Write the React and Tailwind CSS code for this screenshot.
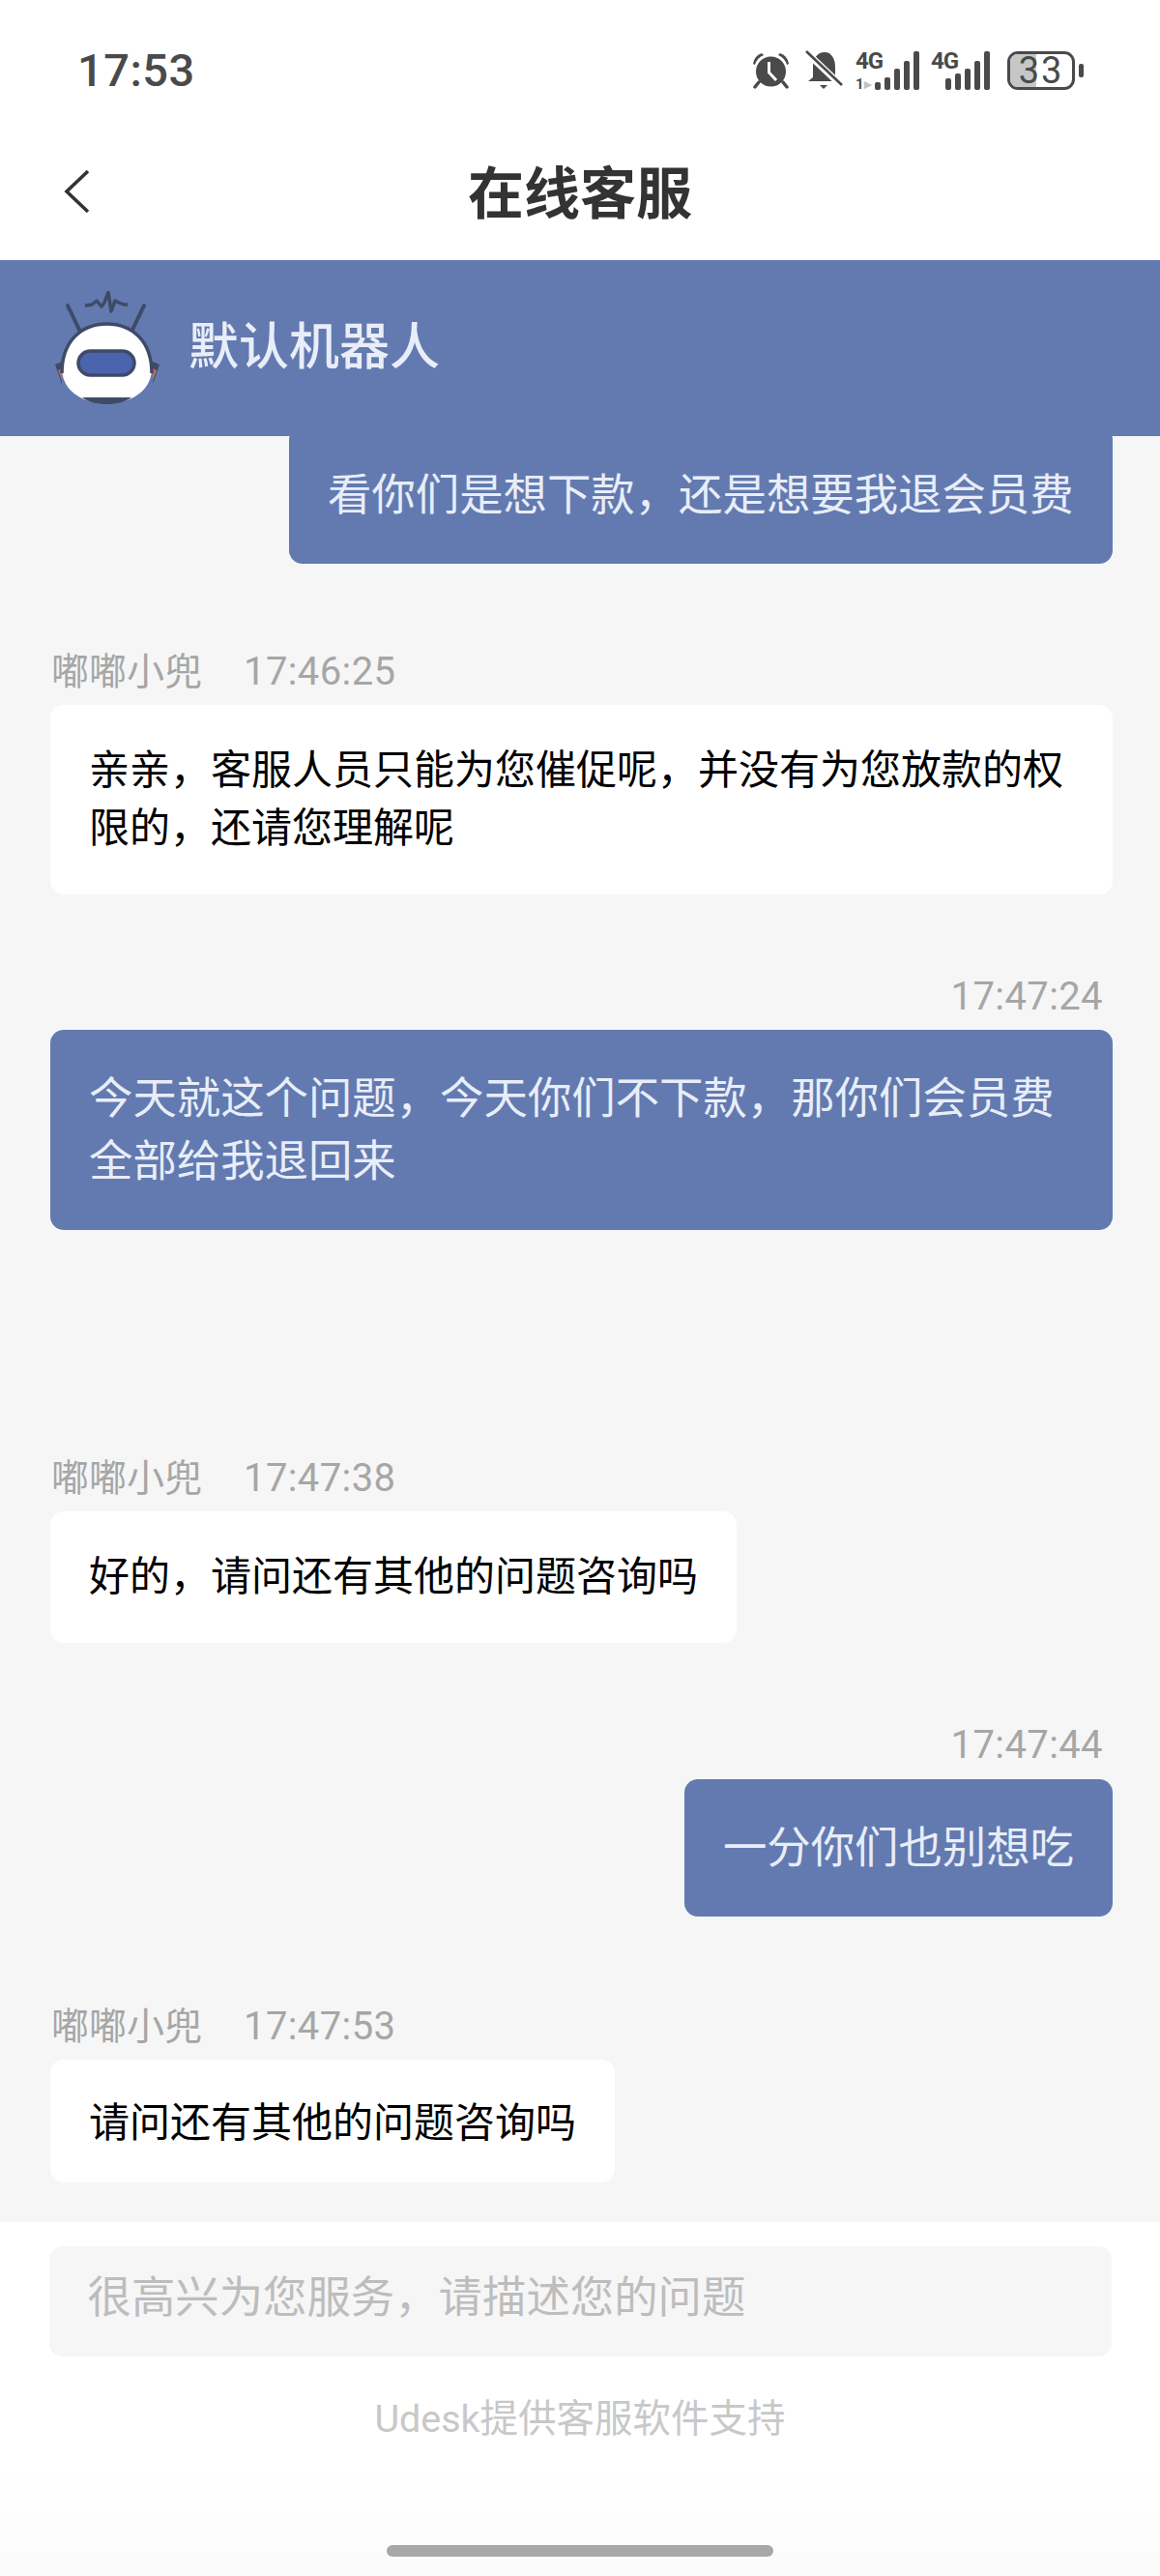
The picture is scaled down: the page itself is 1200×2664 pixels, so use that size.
const cjk = "font-['Roboto','Noto_Sans_CJK_SC',sans-serif]";

function AlarmIcon() {
  return (
    <svg width="39" height="38" viewBox="0 0 39 38">
      <circle cx="19.5" cy="20" r="15.5" fill="#4a4a4a" />
      <path d="M1 12 Q2 4 10 1 L12 3 Q5 6 3 13 Z" fill="#4a4a4a" />
      <path d="M38 12 Q37 4 29 1 L27 3 Q34 6 36 13 Z" fill="#4a4a4a" />
      <path d="M7 31 L3 36 M32 31 L36 36" stroke="#4a4a4a" strokeWidth="3.5" strokeLinecap="round" />
      <path d="M17.5 10 V21 L25 29" stroke="#fff" strokeWidth="3" fill="none" />
    </svg>
  );
}

function BellOffIcon() {
  return (
    <svg width="39" height="42" viewBox="0 0 39 42">
      <path d="M20 2 C28 2 31 10 31 17 V26 L36 32 H3 L8 28 V17 C8 9 12 2 20 2 Z" fill="#4a4a4a" />
      <path d="M15 36 H23 L19 40 Z" fill="#4a4a4a" />
      <path d="M1 2 L38 37" stroke="#fff" strokeWidth="7" />
      <path d="M1 1 L38 36" stroke="#4a4a4a" strokeWidth="2.6" />
    </svg>
  );
}

function Signal({ primary }) {
  const bars = primary ? [8, 13, 22, 30, 40] : [12, 17, 22, 30, 40];
  return (
    <div className={`relative flex h-[40px] items-end justify-end ${primary ? "w-[66px]" : "w-[61px]"}`}>
      <span className="absolute top-[-3px] left-0 text-[24px] leading-[26px] font-bold tracking-[-1px] text-[#4a4a4a] font-['Roboto',sans-serif]">
        4G
      </span>
      {primary ? (
        <span className="absolute bottom-[-2px] left-0 text-[15px] leading-[16px] font-bold text-[#4a4a4a] font-['Roboto',sans-serif]">
          1<span className="text-[#c4c4c4]">▸</span>
        </span>
      ) : null}
      <div className="flex items-end gap-[4px]">
        {bars.map((h, i) => (
          <div key={i} className="w-[6px] rounded-[2px] bg-[#4a4a4a]" style={{ height: h }} />
        ))}
      </div>
    </div>
  );
}

function Battery() {
  return (
    <div className="flex items-center gap-[4px]">
      <div className="relative flex h-[40px] w-[70px] items-center justify-center rounded-[11px] border-[3px] border-[#4a4a4a]">
        <div className="absolute inset-y-0 left-0 w-[27px] rounded-l-[8px] bg-[#c6c6c6]" />
        <span className="relative text-[38px] leading-[34px] tracking-[2px] text-[#4a4a4a] font-['Roboto',sans-serif]">33</span>
      </div>
      <div className="h-[14px] w-[5px] rounded-[2px] bg-[#4a4a4a]" />
    </div>
  );
}

function StatusBar() {
  return (
    <div className="flex h-[106px] items-end justify-between pr-[79px] pb-[12px] pl-[80px]">
      <span className="mb-[-5px] text-[47px] leading-[52px] font-medium tracking-[0.5px] text-[#4a4a4a] font-['Roboto',sans-serif]">17:53</span>
      <div className="flex items-center">
        <AlarmIcon />
        <div className="ml-[16px]">
          <BellOffIcon />
        </div>
        <div className="ml-[13px]">
          <Signal primary />
        </div>
        <div className="ml-[12px]">
          <Signal />
        </div>
        <div className="ml-[18px]">
          <Battery />
        </div>
      </div>
    </div>
  );
}

function Robot() {
  return (
    <svg width="112" height="118" viewBox="0 0 112 118">
      <path d="M15 15 L27 40 M94 15 L82 40" stroke="#3f4a66" strokeWidth="4" strokeLinecap="round" />
      <path d="M33 15 L40 14 L45 10 L50 16 L53 12 L57 1 L60 21 L64 10 L68 12 L73 14 L77 14" stroke="#3f4a66" strokeWidth="3.5" fill="none" strokeLinejoin="round" />
      <path d="M2 76 L9 73 V96 Z M110 76 L103 73 V96 Z" fill="#3f4a66" />
      <path d="M5 82 L9 80 V93 Z M107 82 L103 80 V93 Z" fill="#c96a55" />
      <path d="M55.5 34 C82 34 102 52 102 80 C102 100 85 116 55.5 116 C26 116 9 100 9 80 C9 52 29 34 55.5 34 Z" fill="#fff" />
      <path d="M9 85 C9 52 29 34 55.5 34 C82 34 102 52 102 85" stroke="#3f4a66" strokeWidth="3.5" fill="none" />
      <path d="M30 110 H81 C74 115 65 117 55.5 117 C46 117 37 115 30 110 Z" fill="#3f4a66" />
      <rect x="26" y="62" width="58" height="25" rx="12.5" fill="#4a64ad" stroke="#3f4a66" strokeWidth="3.5" />
    </svg>
  );
}

function Header() {
  return (
    <>
      <div className="grid h-[163px] grid-cols-[1fr_auto_1fr] items-start">
        <svg className="mt-[69px] ml-[66px]" width="28" height="46" viewBox="0 0 28 46" fill="none">
          <path d="M25 2 L3 23 L25 44" stroke="#333" strokeWidth="3.6" />
        </svg>
        <h1 className="mt-[55px] text-[58px] leading-[70px] font-bold text-[#333] font-['Noto_Sans_CJK_SC',sans-serif]">在线客服</h1>
      </div>
      <div className="relative z-10 flex h-[182px] items-center bg-[#627ab0] pl-[55px]">
        <Robot />
        <span className="mb-[10px] ml-[28px] text-[52px] leading-[60px] font-medium text-[#e8edf8] font-['Noto_Sans_CJK_SC',sans-serif]">默认机器人</span>
      </div>
    </>
  );
}

function AgentLabel({ time, className }) {
  return (
    <div className={`flex h-[44px] items-center pt-[3px] pl-[1px] text-[39px] leading-[44px] text-[#a6a6a6] ${cjk} ${className}`}>
      <span>嘟嘟小兜</span>
      <span className="ml-[43px] text-[40px] tracking-[0.4px]">{time}</span>
    </div>
  );
}

function TimeLabel({ time, className }) {
  return (
    <div className={`flex h-[44px] items-center justify-end pt-[3px] pr-[10px] text-[40px] leading-[44px] tracking-[0.4px] text-[#a6a6a6] ${cjk} ${className}`}>
      {time}
    </div>
  );
}

function AgentBubble({ children, className }) {
  return (
    <div className={`rounded-[14px] bg-white px-[40px] py-[38px] text-[42px] leading-[60px] text-black ${cjk} ${className}`}>
      {children}
    </div>
  );
}

function UserBubble({ children, className }) {
  return (
    <div className={`rounded-[14px] bg-[#627ab0] px-[40px] py-[38.5px] text-[45.4px] leading-[65px] text-[#e8edf8] ${cjk} ${className}`}>
      {children}
    </div>
  );
}

function Chat() {
  return (
    <div className="h-[1847px] overflow-hidden bg-[#f6f6f6] pr-[49px] pl-[52px]">
      <UserBubble className="-mt-[10px] ml-[247px] whitespace-nowrap">看你们是想下款，还是想要我退会员费</UserBubble>

      <AgentLabel time="17:46:25" className="mt-[88px]" />
      <AgentBubble className="mt-[14px]">亲亲，客服人员只能为您催促呢，并没有为您放款的权限的，还请您理解呢</AgentBubble>

      <TimeLabel time="17:47:24" className="mt-[82px]" />
      <UserBubble className="mt-[14px]">今天就这个问题，今天你们不下款，那你们会员费全部给我退回来</UserBubble>

      <AgentLabel time="17:47:38" className="mt-[233px]" />
      <AgentBubble className="mt-[14px] w-fit">好的，请问还有其他的问题咨询吗</AgentBubble>

      <TimeLabel time="17:47:44" className="mt-[82px]" />
      <UserBubble className="mt-[15px] ml-auto w-fit">一分你们也别想吃</UserBubble>

      <AgentLabel time="17:47:53" className="mt-[90px]" />
      <AgentBubble className="mt-[14px] h-[127px] w-fit pt-[36px]">请问还有其他的问题咨询吗</AgentBubble>
    </div>
  );
}

function Footer() {
  return (
    <div className="flex h-[366px] flex-col items-center bg-gradient-to-b from-white from-70% to-[#fbfbfb] pt-[25px]">
      <div className={`h-[114px] w-[1099px] rounded-[14px] bg-[#f6f6f6] px-[40px] text-[45.4px] leading-[108px] text-[#bdbdbd] ${cjk}`}>
        很高兴为您服务，请描述您的问题
      </div>
      <div className={`mt-[40px] text-[39.5px] leading-[50px] text-[#c8c8c8] ${cjk}`}>Udesk提供客服软件支持</div>
      <div className="mt-[105px] h-[12px] w-[400px] rounded-full bg-[#a8a8a8]" />
    </div>
  );
}

export default function App() {
  return (
    <div className="h-[2664px] w-[1200px] overflow-hidden bg-white">
      <StatusBar />
      <Header />
      <Chat />
      <Footer />
    </div>
  );
}
